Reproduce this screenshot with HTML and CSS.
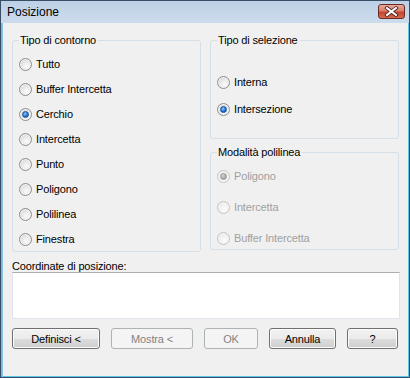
FILE: index.html
```html
<!DOCTYPE html>
<html lang="it">
<head>
    <meta charset="UTF-8">
    <title>Posizione</title>
    <link rel="stylesheet" href="styles.css">
</head>
<body>
    <div class="window">
        <div class="titlebar">
            <span class="title">Posizione</span>
            <span class="close">
                <svg width="15" height="11" viewBox="0 0 15 11">
                    <path d="M3 2 L12 9 M12 2 L3 9" stroke="#4a1a14" stroke-width="3.6" stroke-linecap="square"/>
                    <path d="M3 2 L12 9 M12 2 L3 9" stroke="#ffffff" stroke-width="2" stroke-linecap="square"/>
                </svg>
            </span>
        </div>
        <div class="client">
            <div class="groups">
                <fieldset class="group contour">
                    <legend>Tipo di contorno</legend>
                    <div class="radio"><span class="dot"></span>Tutto</div>
                    <div class="radio"><span class="dot"></span>Buffer Intercetta</div>
                    <div class="radio checked"><span class="dot"></span>Cerchio</div>
                    <div class="radio"><span class="dot"></span>Intercetta</div>
                    <div class="radio"><span class="dot"></span>Punto</div>
                    <div class="radio"><span class="dot"></span>Poligono</div>
                    <div class="radio"><span class="dot"></span>Polilinea</div>
                    <div class="radio"><span class="dot"></span>Finestra</div>
                </fieldset>
                <div class="right-col">
                    <fieldset class="group selection">
                        <legend>Tipo di selezione</legend>
                        <div class="radio"><span class="dot"></span>Interna</div>
                        <div class="radio checked"><span class="dot"></span>Intersezione</div>
                    </fieldset>
                    <fieldset class="group polyline">
                        <legend>Modalità polilinea</legend>
                        <div class="radio checked disabled"><span class="dot"></span>Poligono</div>
                        <div class="radio disabled"><span class="dot"></span>Intercetta</div>
                        <div class="radio disabled"><span class="dot"></span>Buffer Intercetta</div>
                    </fieldset>
                </div>
            </div>
            <div class="coord-label">Coordinate di posizione:</div>
            <div class="coord-box"></div>
            <div class="buttons">
                <button class="btn btn-define">Definisci &lt;</button>
                <button class="btn btn-show" disabled>Mostra &lt;</button>
                <button class="btn btn-ok" disabled>OK</button>
                <button class="btn btn-cancel">Annulla</button>
                <button class="btn btn-help">?</button>
            </div>
        </div>
    </div>
</body>
</html>
```

FILE: styles.css
```css
body {
    margin: 0;
    font-family: "Liberation Sans", Arial, sans-serif;
    font-size: 11px;
    letter-spacing: -0.15px;
    color: #000;
}
.window {
    width: 410px;
    height: 378px;
    box-sizing: border-box;
    border: 1px solid #3a4d66;
    background: #5cc3ea;
    display: flex;
    flex-direction: column;
}
.titlebar {
    height: 22px;
    background: linear-gradient(#bcd0e6, #cddcec);
    display: flex;
    align-items: center;
    justify-content: space-between;
    padding: 0 4px 0 6px;
}
.title {
    font-size: 12px;
    letter-spacing: 0;
    color: #000;
}
.close {
    width: 27px;
    height: 15px;
    box-sizing: border-box;
    margin-top: -2px;
    border: 1px solid #6e2a22;
    border-radius: 3px;
    background: linear-gradient(#e8a99c 0%, #d7806d 45%, #c2472f 55%, #d36a4f 100%);
    display: flex;
    align-items: center;
    justify-content: center;
}
.client {
    flex: 1;
    margin: 0 1px 1px 1px;
    background: #f0f0f0;
    padding: 11px 8px 0 10px;
    box-shadow: inset 1px 0 0 #8cc4e8;
}
.groups {
    display: grid;
    grid-template-columns: 189px 189px;
    column-gap: 9px;
    align-items: start;
}
.right-col {
    display: flex;
    flex-direction: column;
    gap: 7px;
}
.group {
    margin: 0;
    border: 1px solid #d5dfe5;
    border-radius: 3px;
    padding: 0 0 0 6px;
    display: flex;
    flex-direction: column;
}
.group legend {
    padding: 0 2px 0 1px;
    line-height: 13px;
}
.contour {
    padding-top: 9px;
    padding-bottom: 4px;
    gap: 9px;
}
.selection {
    padding-top: 27px;
    padding-bottom: 21px;
    gap: 11px;
}
.polyline {
    padding-top: 9px;
    padding-bottom: 3px;
    gap: 15px;
}
.radio {
    height: 16px;
    display: flex;
    align-items: center;
    gap: 4px;
}
.dot {
    width: 13px;
    height: 13px;
    box-sizing: border-box;
    border-radius: 50%;
    border: 1px solid #8d8d8d;
    background: radial-gradient(circle at 60% 65%, #fbfbfb 0%, #e8e8e8 45%, #c9c9c9 100%);
    box-shadow: inset 0 0 0 1px #f4f4f4;
    display: flex;
    align-items: center;
    justify-content: center;
}
.checked .dot::after {
    content: "";
    width: 5px;
    height: 5px;
    border-radius: 50%;
    background: radial-gradient(circle at 40% 35%, #8fd0ff 0%, #2a7ad6 50%, #0b3f8f 100%);
    border: 1px solid #174f9c;
}
.disabled {
    color: #a0a0a0;
}
.disabled .dot {
    border-color: #c4c4c4;
    background: radial-gradient(circle at 60% 65%, #fbfbfb 0%, #eeeeee 60%, #e0e0e0 100%);
}
.disabled.checked .dot::after {
    background: radial-gradient(circle at 40% 35%, #d8d8d8 0%, #a8a8a8 60%, #8c8c8c 100%);
    border-color: #9a9a9a;
}
.coord-label {
    margin-top: 8px;
    line-height: 12px;
}
.coord-box {
    height: 47px;
    box-sizing: border-box;
    background: #fff;
    border: 1px solid #e2e3ea;
    border-top-color: #abadb3;
}
.buttons {
    display: flex;
    gap: 11px;
    margin-top: 9px;
}
.btn {
    height: 21px;
    padding: 0;
    font-family: "Liberation Sans", Arial, sans-serif;
    font-size: 11px;
    letter-spacing: -0.15px;
    color: #000;
    border: 1px solid #707070;
    border-radius: 3px;
    background: linear-gradient(#f2f2f2 0%, #ebebeb 50%, #dddddd 50%, #cfcfcf 100%);
    box-shadow: inset 0 0 0 1px #fbfbfb;
}
.btn:disabled {
    color: #838383;
    border-color: #adb2b5;
    background: #f4f4f4;
    box-shadow: none;
}
.btn-define { width: 88px; }
.btn-show { width: 82px; }
.btn-ok { width: 54px; }
.btn-cancel { width: 67px; }
.btn-help { width: 51px; }
```
